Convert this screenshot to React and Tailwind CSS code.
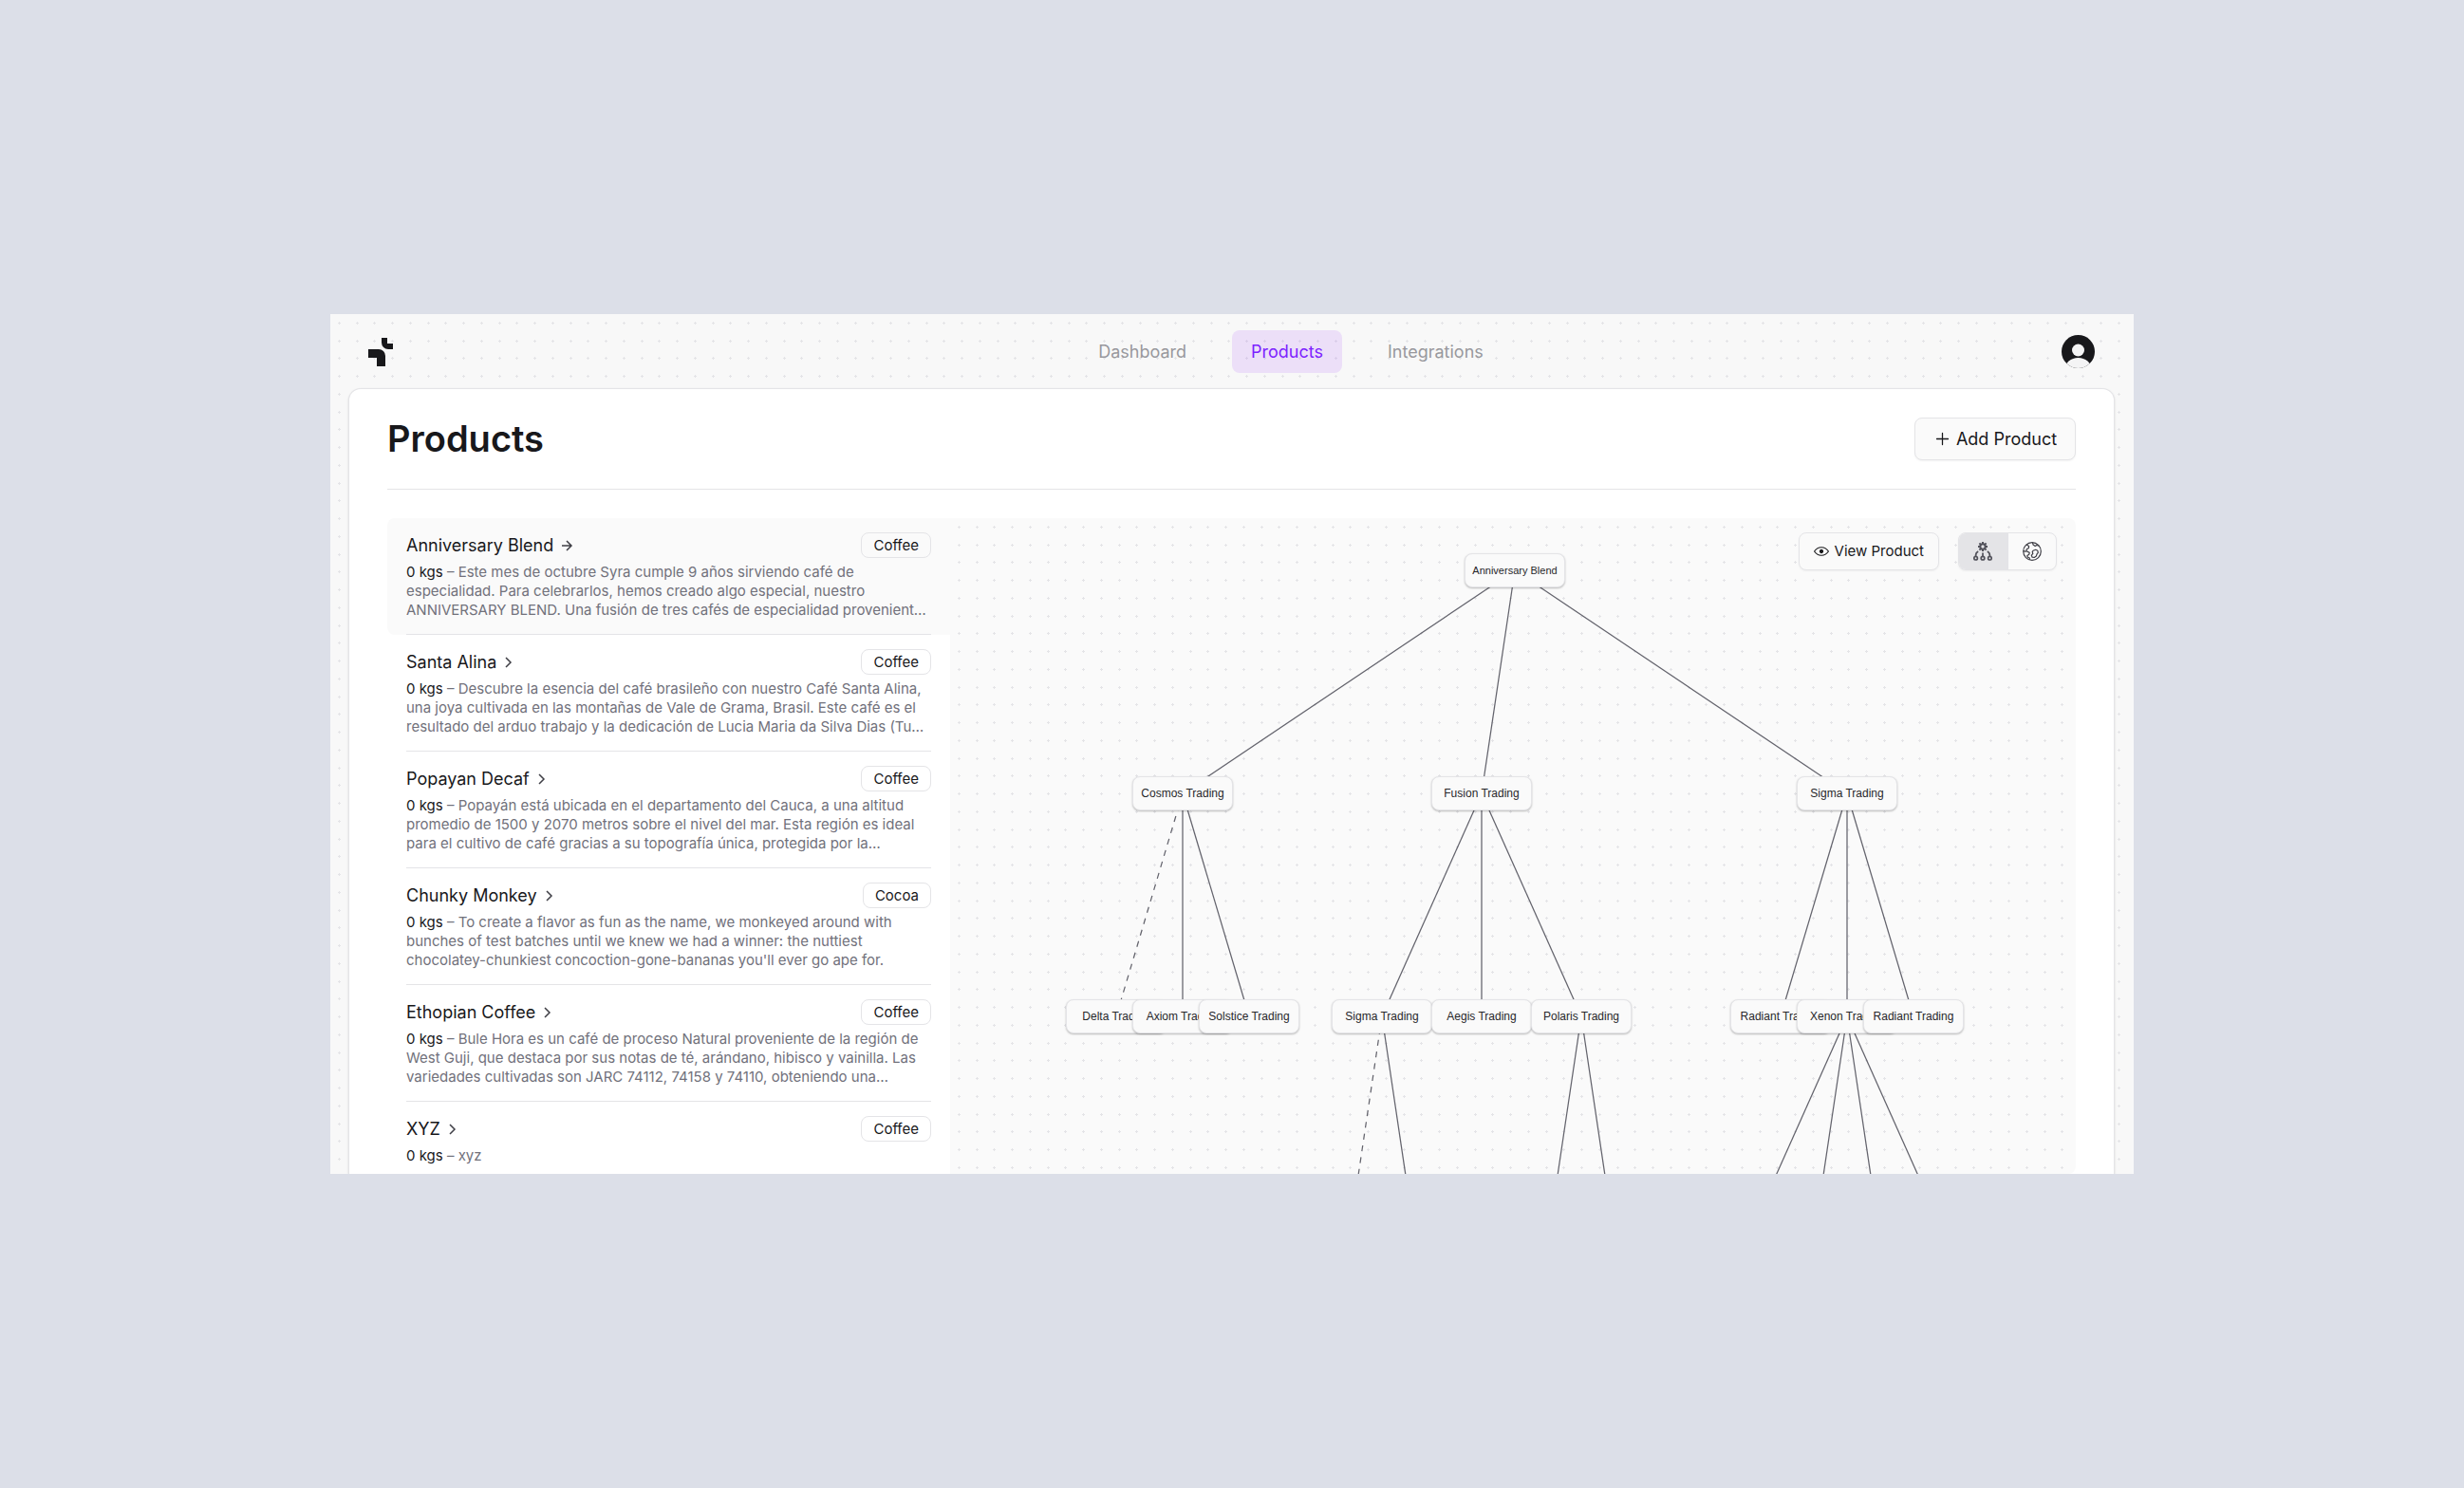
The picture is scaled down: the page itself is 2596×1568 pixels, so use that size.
import { RxEyeOpen, RxPlus } from 'react-icons/rx'

const products = [
  {
    name: 'Anniversary Blend',
    type: 'Coffee',
    text: 'Este mes de octubre Syra cumple 9 años sirviendo café de especialidad. Para celebrarlos, hemos creado algo especial, nuestro ANNIVERSARY BLEND. Una fusión de tres cafés de especialidad provenientes de distintos orígenes.',
  },
  {
    name: 'Santa Alina',
    type: 'Coffee',
    text: 'Descubre la esencia del café brasileño con nuestro Café Santa Alina, una joya cultivada en las montañas de Vale de Grama, Brasil. Este café es el resultado del arduo trabajo y la dedicación de Lucia Maria da Silva Dias (Tuca Dias).',
  },
  {
    name: 'Popayan Decaf',
    type: 'Coffee',
    text: 'Popayán está ubicada en el departamento del Cauca, a una altitud promedio de 1500 y 2070 metros sobre el nivel del mar. Esta región es ideal para el cultivo de café gracias a su topografía única, protegida por la cordillera de los Andes.',
  },
  {
    name: 'Chunky Monkey',
    type: 'Cocoa',
    text: "To create a flavor as fun as the name, we monkeyed around with bunches of test batches until we knew we had a winner: the nuttiest chocolatey-chunkiest concoction-gone-bananas you'll ever go ape for.",
  },
  {
    name: 'Ethopian Coffee',
    type: 'Coffee',
    text: 'Bule Hora es un café de proceso Natural proveniente de la región de West Guji, que destaca por sus notas de té, arándano, hibisco y vainilla. Las variedades cultivadas son JARC 74112, 74158 y 74110, obteniendo una puntuación excelente.',
  },
  { name: 'XYZ', type: 'Coffee', text: 'xyz' },
]

// node centres on the canvas
const nodes = [
  { id: 'root', label: 'Anniversary Blend', x: 595, y: 55, small: true },
  { id: 'cosmos', label: 'Cosmos Trading', x: 245, y: 290 },
  { id: 'fusion', label: 'Fusion Trading', x: 560, y: 290 },
  { id: 'sigma', label: 'Sigma Trading', x: 945, y: 290 },
  { id: 'delta', label: 'Delta Trading', x: 175, y: 525 },
  { id: 'axiom', label: 'Axiom Trading', x: 245, y: 525 },
  { id: 'solstice', label: 'Solstice Trading', x: 315, y: 525 },
  { id: 'sigma2', label: 'Sigma Trading', x: 455, y: 525 },
  { id: 'aegis', label: 'Aegis Trading', x: 560, y: 525 },
  { id: 'polaris', label: 'Polaris Trading', x: 665, y: 525 },
  { id: 'radiant', label: 'Radiant Trading', x: 875, y: 525 },
  { id: 'xenon', label: 'Xenon Trading', x: 945, y: 525 },
  { id: 'radiant2', label: 'Radiant Trading', x: 1015, y: 525 },
]

// x1, y1, x2, y2, dashed
const edges = [
  [595, 55, 245, 290],
  [595, 55, 560, 290],
  [595, 55, 945, 290],
  [245, 290, 175, 525, true],
  [245, 290, 245, 525],
  [245, 290, 315, 525],
  [560, 290, 455, 525],
  [560, 290, 560, 525],
  [560, 290, 665, 525],
  [945, 290, 875, 525],
  [945, 290, 945, 525],
  [945, 290, 1015, 525],
  [455, 525, 420, 760, true],
  [455, 525, 490, 760],
  [665, 525, 630, 760],
  [665, 525, 700, 760],
  [945, 525, 840, 760],
  [945, 525, 910, 760],
  [945, 525, 980, 760],
  [945, 525, 1050, 760],
]

const steps = [9, 28, 46, 65]

function Dots({ id }) {
  return (
    <svg className="absolute inset-0 h-full w-full" aria-hidden="true">
      <pattern id={id} width="75" height="75" patternUnits="userSpaceOnUse">
        {steps.map((y) =>
          steps.map((x) => (
            <g key={`${x}-${y}`} fill="#e4e4e7">
              <rect x={x - 1} y={y} width="3" height="1" />
              <rect x={x} y={y - 1} width="1" height="3" />
            </g>
          ))
        )}
      </pattern>
      <rect width="100%" height="100%" fill={`url(#${id})`} />
    </svg>
  )
}

function Logo() {
  return (
    <svg width="26" height="30" viewBox="0 0 26 30" fill="#18181b" aria-hidden="true">
      <path d="M14 0h6v6h6v6h-5a7 7 0 0 1-7-7z" />
      <path d="M0 12h11a7 7 0 0 1 7 7v11H9v-9H0z" />
    </svg>
  )
}

function Avatar() {
  return (
    <svg width="35" height="35" viewBox="0 0 35 35" aria-hidden="true">
      <clipPath id="avatar">
        <circle cx="17.5" cy="17.5" r="17.5" />
      </clipPath>
      <g clipPath="url(#avatar)">
        <rect width="35" height="35" fill="#18181b" />
        <circle cx="17.5" cy="16" r="6.5" fill="#f4f4f5" />
        <ellipse cx="17.5" cy="36" rx="14" ry="12" fill="#f4f4f5" />
      </g>
    </svg>
  )
}

// the chevron slides right and grows a tail on the active row
function RowArrow({ active }) {
  return (
    <svg width="16" height="16" viewBox="0 0 16 16" fill="none" stroke="#3f3f46" strokeWidth="1.5" aria-hidden="true">
      <path d={active ? 'M7 3l5 5-5 5M2 8h10' : 'M3 3l5 5-5 5'} />
    </svg>
  )
}

function TreeIcon() {
  return (
    <svg width="20" height="20" viewBox="0 0 20 20" fill="none" stroke="#52525b" strokeWidth="1.7" aria-hidden="true">
      <circle cx="10" cy="5" r="2.7" strokeWidth="2" />
      <path d="M10 0v2M10 8v2M5 5h2M13 5h2M6.4 1.4l1.5 1.5M13.6 1.4l-1.5 1.5M6.4 8.6l1.5-1.5M13.6 8.6l-1.5-1.5" strokeWidth="2" />
      <circle cx="2.6" cy="17.2" r="1.8" />
      <circle cx="10" cy="17.2" r="1.8" />
      <circle cx="17.4" cy="17.2" r="1.8" />
      <path d="M10 11.5v4M2.6 15.5v-1.2q0-3 2.6-4.3M17.4 15.5v-1.2q0-3-2.6-4.3" />
    </svg>
  )
}

function GlobeIcon() {
  return (
    <svg width="20" height="20" viewBox="0 0 20 20" fill="none" stroke="#3f3f46" strokeWidth="1.2" strokeLinejoin="round" aria-hidden="true">
      <circle cx="10" cy="10" r="9.3" />
      <path d="M4 2.9l2.6 1.6-.2 2L4 8l.2 1.8 3 1.6-.4 1.8-2 1.4.6 1.6 2 .8-.2 1.9M.8 9.6l2.2.6 1.2-.4" />
      <path d="M10.5.9l.6 2.2 2.1 1.4 1.6-1 2.6.8" />
      <path d="M11 9.2l2.8-.9 2 .9.5 2.3-1.2 1.2-.8 2.4-2 1.4-2.2-.3-.8-2 1.5-1.9-.6-1.7z" />
    </svg>
  )
}

function Header() {
  return (
    <header className="relative flex items-center justify-between py-[17px] pl-10 pr-[41px]">
      <a href="#home" aria-label="Home" className="flex w-40">
        <Logo />
      </a>
      <nav className="flex gap-7 text-[18px] leading-[25px]">
        <a href="#dashboard" className="rounded-lg px-5 py-[10px] text-[#98989d]">Dashboard</a>
        <a href="#products" className="rounded-lg bg-[#8a08ff]/10 px-5 py-[10px] text-[#7c22ff]">Products</a>
        <a href="#integrations" className="rounded-lg px-5 py-[10px] text-[#98989d]">Integrations</a>
      </nav>
      <button type="button" aria-label="Account">
        <Avatar />
      </button>
    </header>
  )
}

function ProductRow({ product, active }) {
  return (
    <li className={active ? 'rounded-l-lg bg-[#fafafa] px-5' : 'px-5'}>
      <div className="border-b border-zinc-200 py-[15px]">
        <div className="flex h-[27px] items-center justify-between">
          <a href="#product" className="flex items-center gap-[7px] text-[18px] leading-[25px] text-zinc-900">
            {product.name}
            <RowArrow active={active} />
          </a>
          <span className="rounded-lg border border-zinc-200 px-3 text-[15px] leading-[25px] text-zinc-900">
            {product.type}
          </span>
        </div>
        <p className="mt-[5px] line-clamp-3 text-[15px] leading-5 text-zinc-500">
          <span className="text-zinc-900">0 kgs</span> – {product.text}
        </p>
      </div>
    </li>
  )
}

function Canvas() {
  return (
    <section className="relative flex-1 overflow-hidden rounded-r-lg bg-[#fafafa]">
      <Dots id="canvas-dots" />
      <svg className="absolute inset-0 h-full w-full" stroke="#63636c" strokeWidth="1.25" aria-hidden="true">
        {edges.map(([x1, y1, x2, y2, dashed], i) => (
          <line key={i} x1={x1} y1={y1} x2={x2} y2={y2} strokeDasharray={dashed ? '6.25 6.25' : undefined} />
        ))}
      </svg>
      {nodes.map((n) => (
        <div
          key={n.id}
          className="absolute flex h-9 w-[106px] items-center justify-center whitespace-nowrap rounded-lg border border-zinc-200 bg-[#fafafa] font-['Liberation_Sans',Arial,sans-serif] text-zinc-800 shadow-[0_1px_2px_rgba(0,0,0,0.25)]"
          style={{ left: n.x - 53, top: n.y - 18 }}
        >
          <span className={n.small ? 'text-[11px]' : 'text-[12px]'}>{n.label}</span>
        </div>
      ))}
      <div className="relative flex justify-end gap-5 px-5 py-[15px]">
        <button type="button" className="flex h-10 items-center gap-[6px] rounded-lg border border-zinc-200 bg-[#fafafa] px-[15px] text-[15px] text-zinc-900 shadow-xs">
          <RxEyeOpen size={16} />
          View Product
        </button>
        <div className="flex h-10 w-[104px] overflow-hidden rounded-lg border border-zinc-200 bg-[#fafafa] shadow-xs">
          <button type="button" aria-label="Tree view" className="flex flex-1 items-center justify-center border-r border-zinc-200 bg-zinc-200">
            <TreeIcon />
          </button>
          <button type="button" aria-label="Map view" className="flex flex-1 items-center justify-center">
            <GlobeIcon />
          </button>
        </div>
      </div>
    </section>
  )
}

export default function App() {
  return (
    <div className="h-screen bg-[#dcdfe8] px-[348px] py-[331px] font-['Inter',sans-serif]">
      <div className="relative flex h-full flex-col overflow-hidden bg-[#f8f8f8]">
        <Dots id="page-dots" />
        <Header />

        <main className="relative ml-5 mr-[21px] flex min-h-0 flex-1 flex-col rounded-t-xl bg-white px-10 shadow-[0_1px_3px_rgba(0,0,0,0.3)] ring-1 ring-zinc-200">
          <div className="flex items-center justify-between border-b border-zinc-200 py-[30px]">
            <h1 className="text-[38px] font-semibold leading-[45px] text-zinc-900">Products</h1>
            <button type="button" className="flex h-[45px] w-[170px] items-center justify-center gap-[5px] rounded-lg border border-zinc-200 bg-[#fafafa] text-[18px] text-zinc-900 shadow-xs">
              <RxPlus size={19} />
              Add Product
            </button>
          </div>

          <div className="mt-[30px] flex min-h-0 flex-1">
            <ul className="w-1/3 overflow-hidden">
              {products.map((p, i) => (
                <ProductRow key={p.name} product={p} active={i === 0} />
              ))}
            </ul>
            <Canvas />
          </div>
        </main>
      </div>
    </div>
  )
}
